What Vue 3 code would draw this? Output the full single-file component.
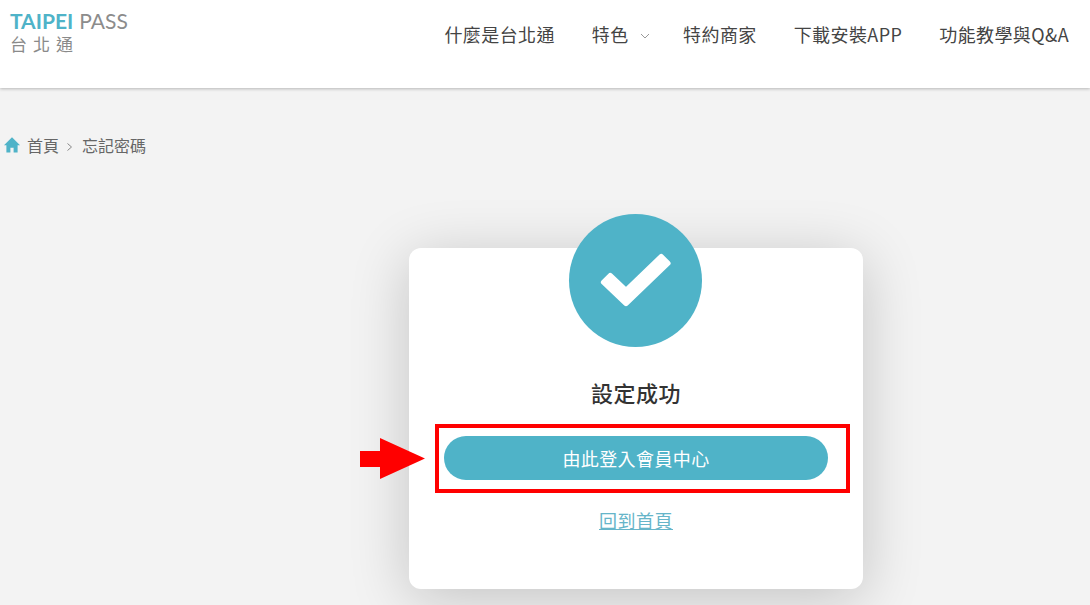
<template>
  <div class="page">
    <header class="header">
      <div class="logo">
        <div class="logo-en"><b>TAIPEI</b><span>PASS</span></div>
        <div class="logo-zh">台北通</div>
      </div>
      <nav class="nav">
        <a>什麼是台北通</a>
        <a class="has-sub">特色
          <svg width="10" height="6" viewBox="0 0 10 6"><path d="M1 1l4 4 4-4" fill="none" stroke="#999" stroke-width="1" /></svg>
        </a>
        <a>特約商家</a>
        <a>下載安裝APP</a>
        <a>功能教學與Q&amp;A</a>
      </nav>
    </header>

    <div class="crumbs">
      <svg class="home" width="16" height="16" viewBox="0 0 16 16"><path d="M8 .3L0 8.2h2.4V15.5h4v-4.8h3.2v4.8h4V8.2H16z" fill="#4fb3c8" /></svg>
      <span>首頁</span>
      <svg class="sep" width="7" height="10" viewBox="0 0 7 10"><path d="M1.5 1.5L5.5 5l-4 3.5" fill="none" stroke="#888" stroke-width="1" /></svg>
      <span>忘記密碼</span>
    </div>

    <main class="card">
      <div class="circle">
        <svg width="133" height="133" viewBox="0 0 133 133">
          <polygon points="34.4,68.2 41.2,61.4 57,76.3 92.3,42.4 99.1,49.2 57,89.7" fill="#fff" stroke="#fff" stroke-width="5" stroke-linejoin="round" />
        </svg>
      </div>
      <h2 class="title">設定成功</h2>
      <div class="highlight">
        <button class="login">由此登入會員中心</button>
        <svg class="arrow" width="66" height="42" viewBox="0 0 66 42"><polygon points="0,13 20,13 20,0 65,20.5 20,41 20,29 0,29" fill="#f00" /></svg>
      </div>
      <a class="back">回到首頁</a>
    </main>
  </div>
</template>

<script setup>
</script>

<style>
html, body {
  overflow: hidden;
}
</style>

<style scoped>
.page {
  width: 1090px;
  height: 605px;
  overflow: hidden;
  background: #f3f3f3;
  font-family: "Noto Sans CJK TC", "Noto Sans", sans-serif;
  color: #444;
}
.header {
  height: 88px;
  box-sizing: border-box;
  background: #fff;
  box-shadow: 0 1px 3px rgba(0, 0, 0, 0.25);
  display: flex;
  justify-content: space-between;
  padding: 10px 21px 0 10px;
}
.logo {
  margin-top: -1px;
}
.logo-en {
  display: flex;
  gap: 6px;
  font-family: Lato, sans-serif;
  font-size: 21px;
  line-height: 24px;
  color: #8c8c8c;
}
.logo-en b {
  color: #4fb3c8;
  font-weight: 700;
}
.logo-zh {
  font-size: 17px;
  line-height: 17px;
  letter-spacing: 6px;
  margin-top: 2px;
  color: #8a8a8a;
}
.nav {
  display: flex;
  gap: 37px;
  height: 48px;
  align-items: center;
  font-size: 18px;
  letter-spacing: 0.4px;
}
.nav a {
  white-space: nowrap;
}
.has-sub svg {
  margin-left: 7px;
  margin-right: -4px;
  vertical-align: 3px;
}
.crumbs {
  display: flex;
  align-items: center;
  height: 24px;
  margin-top: 45px;
  padding-left: 4px;
  font-size: 16px;
  color: #666;
}
.home {
  margin-right: 7px;
}
.sep {
  margin: 3px 9px 0 7px;
}
.card {
  position: relative;
  width: 454px;
  height: 341px;
  margin: 91px 0 0 409px;
  background: #fff;
  border-radius: 12px;
  box-shadow: 0 10px 60px rgba(0, 0, 0, 0.2);
  display: flex;
  flex-direction: column;
  align-items: center;
}
.circle {
  width: 133px;
  height: 133px;
  margin: -34px 1px 0 0;
  border-radius: 50%;
  background: #4fb3c8;
  flex: none;
}
.circle svg {
  display: block;
}
.title {
  margin: 30px 0 0;
  font-size: 22px;
  line-height: 30px;
  font-weight: 500;
  letter-spacing: 0.5px;
  color: #333;
}
.highlight {
  position: relative;
  align-self: flex-start;
  width: 415px;
  height: 69px;
  box-sizing: border-box;
  margin: 17px 0 0 26px;
  padding: 8px 18px 9px 5px;
  border: 4px solid #f00;
}
.login {
  display: block;
  width: 100%;
  height: 44px;
  padding: 0;
  border: none;
  border-radius: 22px;
  background: #4fb3c8;
  color: #fff;
  font-family: inherit;
  font-size: 18px;
  font-weight: 400;
  letter-spacing: 0.4px;
}
.arrow {
  position: absolute;
  left: -79px;
  top: 10px;
}
.back {
  margin-top: 15px;
  font-size: 18px;
  line-height: 24px;
  letter-spacing: 0.5px;
  color: #66b5c9;
  text-decoration: underline;
}
</style>
